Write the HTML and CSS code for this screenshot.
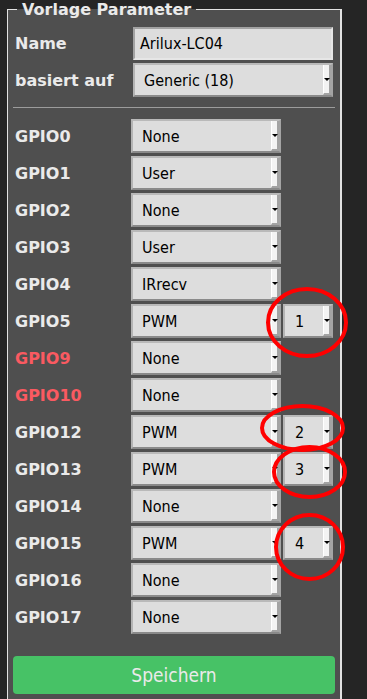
FILE: index.html
```html
<!DOCTYPE html>
<html lang="de">
<head>
  <meta charset="UTF-8" />
  <meta name="viewport" content="width=device-width, initial-scale=1.0"/>
  <title>Vorlage konfigurieren</title>
  <link rel="stylesheet" href="styles.css">
</head>
<body>
  <fieldset class="tpl">
    <legend>Vorlage Parameter</legend>

    <div class="head">
      <span class="lbl">Name</span>
      <div class="inp">Arilux-LC04</div>
      <span class="lbl">basiert auf</span>
      <div class="sel"><span class="txt">Generic (18)</span><i class="arr"></i></div>
    </div>

    <hr>

    <div class="gpios">
      <span class="lbl">GPIO0</span>
      <div class="sel"><span class="txt">None</span><i class="arr"></i></div><span></span>
      <span class="lbl">GPIO1</span>
      <div class="sel"><span class="txt">User</span><i class="arr"></i></div><span></span>
      <span class="lbl">GPIO2</span>
      <div class="sel"><span class="txt">None</span><i class="arr"></i></div><span></span>
      <span class="lbl">GPIO3</span>
      <div class="sel"><span class="txt">User</span><i class="arr"></i></div><span></span>
      <span class="lbl">GPIO4</span>
      <div class="sel"><span class="txt">IRrecv</span><i class="arr"></i></div><span></span>
      <span class="lbl">GPIO5</span>
      <div class="sel"><span class="txt">PWM</span><i class="arr"></i></div>
      <div class="sel small"><span class="txt">1</span><i class="arr"></i></div>
      <span class="lbl red">GPIO9</span>
      <div class="sel"><span class="txt">None</span><i class="arr"></i></div><span></span>
      <span class="lbl red">GPIO10</span>
      <div class="sel"><span class="txt">None</span><i class="arr"></i></div><span></span>
      <span class="lbl">GPIO12</span>
      <div class="sel"><span class="txt">PWM</span><i class="arr"></i></div>
      <div class="sel small"><span class="txt">2</span><i class="arr"></i></div>
      <span class="lbl">GPIO13</span>
      <div class="sel"><span class="txt">PWM</span><i class="arr"></i></div>
      <div class="sel small"><span class="txt">3</span><i class="arr"></i></div>
      <span class="lbl">GPIO14</span>
      <div class="sel"><span class="txt">None</span><i class="arr"></i></div><span></span>
      <span class="lbl">GPIO15</span>
      <div class="sel"><span class="txt">PWM</span><i class="arr"></i></div>
      <div class="sel small"><span class="txt">4</span><i class="arr"></i></div>
      <span class="lbl">GPIO16</span>
      <div class="sel"><span class="txt">None</span><i class="arr"></i></div><span></span>
      <span class="lbl">GPIO17</span>
      <div class="sel"><span class="txt">None</span><i class="arr"></i></div><span></span>
    </div>

    <button class="save">Speichern</button>
  </fieldset>

  <!-- hand drawn red marks over the channel selects -->
  <svg class="marks" width="367" height="699" viewBox="0 0 367 699">
    <ellipse cx="307" cy="322.5" rx="39" ry="33.5"/>
    <ellipse cx="302.5" cy="428" rx="40.5" ry="22"/>
    <ellipse cx="309.5" cy="472" rx="35.5" ry="25"/>
    <ellipse cx="309.5" cy="547" rx="33.5" ry="32"/>
  </svg>
</body>
</html>
```

FILE: styles.css
```css
body {
  margin: 0;
  background: #252525;
  color: #eaeaea;
  font-family: "DejaVu Sans", Verdana, sans-serif;
  overflow: hidden;
}

.tpl {
  margin: 0 0 0 7px;
  width: 335px;
  box-sizing: border-box;
  padding: 8px 5px 20px 5px;
  background: #4f4f4f;
  border: 1px solid #e2e2e2;
  border-right-width: 2px;
  min-width: 0;
}

legend {
  margin-left: 4px;
  padding: 0 5px;
  font-weight: bold;
  font-size: 16px;
  line-height: 19px;
}

.lbl {
  font-weight: bold;
  font-size: 16px;
  padding-left: 2px;
  align-self: center;
}

.lbl.red {
  color: #fa5a61;
}

.head {
  display: grid;
  grid-template-columns: 120px 200px;
  grid-template-rows: 33px 34px;
  row-gap: 3px;
}

.gpios {
  display: grid;
  grid-template-columns: 116px 150px 50px;
  grid-auto-rows: 34px;
  row-gap: 3px;
  column-gap: 2px;
}

.inp, .sel {
  box-sizing: border-box;
  background: #dddddd;
  color: #000;
  font-family: "DejaVu Sans Condensed", "DejaVu Sans", sans-serif;
  font-stretch: condensed;
  font-size: 16px;
  display: flex;
  align-items: center;
}

.inp {
  border: 2px solid;
  border-color: #a2a2a2 #e6e6e6 #e6e6e6 #a2a2a2;
  padding-left: 5px;
}

.sel {
  border: 2px solid;
  border-color: #b9b9b9 #a4a4a4 #8a8a8a #b4b4b4;
  padding-left: 9px;
}

.sel .txt {
  flex: 1;
}

.sel.small .txt {
  padding-left: 1px;
}

.arr {
  align-self: stretch;
  width: 5px;
  background: #f3f3f3;
  border-left: 1px solid #fff;
  border-right: 2px solid #a3a3a3;
  border-bottom: 2px solid #a3a3a3;
  display: flex;
  align-items: center;
  justify-content: center;
}

.arr::after {
  content: "";
  border-left: 3px solid transparent;
  border-right: 3px solid transparent;
  border-top: 3px solid #000;
  margin-top: 1px;
}

hr {
  border: 0;
  border-top: 1px solid #9c9c9c;
  height: 0;
  margin: 10px 0 11px;
}

.save {
  display: block;
  width: 100%;
  height: 38px;
  margin-top: 22px;
  border: none;
  border-radius: 4px;
  background: #47c266;
  color: #eaeaea;
  font-family: "DejaVu Sans Condensed", "DejaVu Sans", sans-serif;
  font-stretch: condensed;
  font-size: 19px;
  cursor: pointer;
}

.marks {
  position: absolute;
  left: 0;
  top: 0;
  pointer-events: none;
}

.marks ellipse {
  fill: none;
  stroke: #f00;
  stroke-width: 4;
}
```
